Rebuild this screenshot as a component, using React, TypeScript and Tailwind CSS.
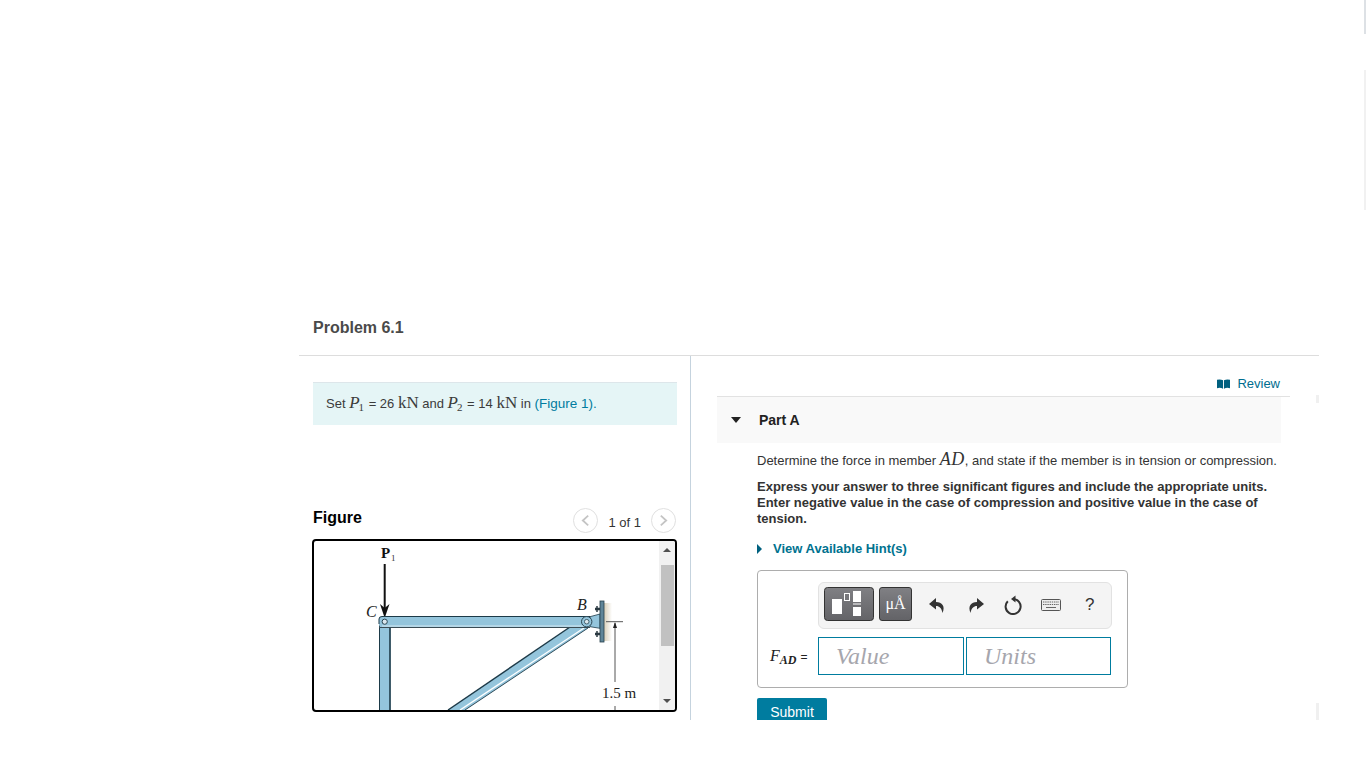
const serif = "font-['Liberation_Serif',serif]";

function Diagram() {
  return (
    <svg viewBox="0 0 345 169" className="block h-[169px] w-[345px]">
      <defs>
        <linearGradient id="wallShadow" x1="0" y1="0" x2="1" y2="0">
          <stop offset="0" stopColor="#d8cfb8" />
          <stop offset="1" stopColor="#ffffff" />
        </linearGradient>
      </defs>
      <text x="67" y="17" fontFamily="Liberation Serif" fontWeight="700" fontSize="15" fill="#111">P</text>
      <text x="77" y="20" fontFamily="Liberation Serif" fontSize="9" fill="#333">1</text>
      <path d="M70.7 23V68" stroke="#111" strokeWidth="2" />
      <path d="M66 63L70.7 77L75.5 63L70.7 67Z" fill="#111" />
      <text x="52" y="76" fontFamily="Liberation Serif" fontStyle="italic" fontSize="16" fill="#222">C</text>
      <text x="263" y="69" fontFamily="Liberation Serif" fontStyle="italic" fontSize="16" fill="#222">B</text>

      {/* vertical member */}
      <path d="M65 82H76.5V169H65Z" fill="#94c5dc" />
      <path d="M65.5 82V169" stroke="#1d3a48" strokeWidth="1" />
      <path d="M76 86V169" stroke="#1d3a48" strokeWidth="1.6" />

      {/* diagonal member */}
      <path d="M134 169L256 86L274 87L151 169Z" fill="#94c5dc" />
      <path d="M134 169L256 86" stroke="#1d3a48" strokeWidth="1.4" />
      <path d="M146 169L270 87" stroke="#ffffff" strokeWidth="1.4" />
      <path d="M151 169L274 87" stroke="#1d3a48" strokeWidth="0.9" />

      {/* top member */}
      <path d="M65 78Q65 75.5 68 75.5H276V86.5H68Q65 86 65 83Z" fill="#94c5dc" />
      <path d="M65 83V78Q65 75.5 68 75.5H276" fill="none" stroke="#1d3a48" strokeWidth="1" />
      <path d="M68 85H276" stroke="#d6e9f2" strokeWidth="1" />
      <path d="M65 86.5H276" stroke="#3a4c55" strokeWidth="1" />

      {/* support */}
      <rect x="290" y="62" width="8" height="38" fill="url(#wallShadow)" />
      <path d="M276 75.7L286 73V87.3L276 85.7Z" fill="#94c5dc" stroke="#1d3a48" strokeWidth="0.8" />
      <rect x="286" y="60" width="4" height="41" fill="#5f8598" stroke="#26404c" strokeWidth="0.8" />
      <path d="M281 68H286M281 93H286" stroke="#2b3a42" strokeWidth="2.4" />
      <path d="M283 65V71M283 90V96" stroke="#2b3a42" strokeWidth="1.5" />
      <circle cx="272.7" cy="80.7" r="5.2" fill="#94c5dc" stroke="#2b4653" />
      <circle cx="272.7" cy="80.7" r="2.3" fill="#dce8ee" stroke="#2b4653" strokeWidth="0.8" />
      <circle cx="70.7" cy="80.7" r="2.6" fill="#dce8ee" stroke="#2b4653" />

      {/* dimension */}
      <path d="M292 80.7H309" stroke="#555" />
      <path d="M301 82V141M301 165V169" stroke="#555" />
      <path d="M299 87L301 81L303 87Z" fill="#222" />
      <text x="288" y="157" fontFamily="Liberation Serif" fontSize="15" fill="#222">1.5 m</text>
    </svg>
  );
}

function FigureBox() {
  return (
    <div className="-ml-[1px] flex h-[173px] w-[365px] overflow-hidden rounded-[4px] border-2 border-black">
      <div className="min-w-0 flex-1 overflow-hidden">
        <Diagram />
      </div>
      <div className="flex w-[16px] shrink-0 flex-col items-center bg-[#f1f1f1]">
        <div className="mt-[7px] h-0 w-0 border-x-[4px] border-b-[4px] border-x-transparent border-b-[#505050]" />
        <div className="mt-[13px] h-[81px] w-[13px] bg-[#c1c1c1]" />
        <div className="mt-auto mb-[7px] h-0 w-0 border-x-[4px] border-t-[4px] border-x-transparent border-t-[#505050]" />
      </div>
    </div>
  );
}

function PagerButton({ dir }: { dir: "left" | "right" }) {
  return (
    <div className="flex h-[25px] w-[25px] items-center justify-center rounded-full border border-[#e0e0e0] bg-white">
      <svg viewBox="0 0 10 14" className="h-[13px] w-[9px]" fill="none" stroke="#c4c4c4" strokeWidth="2">
        <path d={dir === "left" ? "M8 1.5L2 7L8 12.5" : "M2 1.5L8 7L2 12.5"} />
      </svg>
    </div>
  );
}

function MathVar({ base, sub }: { base: string; sub: string }) {
  return (
    <span className={`${serif} text-[17px] italic`}>
      {base}
      <sub className="ml-[-1px] pr-[1px] text-[11px] not-italic">{sub}</sub>
    </span>
  );
}

function Kn() {
  return <span className={`${serif} text-[17px]`}>kN</span>;
}

function LeftPane() {
  return (
    <div className="w-[392px] shrink-0 border-r border-[#c5d3de] pl-[14px]">
      <div className="mt-[26px] flex h-[43px] w-[364px] items-center border-t border-[#dde6ea] bg-[#e5f5f6] pb-[2px] pl-[13px] text-[13px] text-[#3b3b3b]">
        <span>
          Set <MathVar base="P" sub="1" /> = 26 <Kn /> and <MathVar base="P" sub="2" /> = 14 <Kn /> in{" "}
          <span className="text-[13.5px] text-[#007c9f]">(Figure 1).</span>
        </span>
      </div>
      <div className="mt-[79px] flex h-[35px] w-[364px] items-start justify-between">
        <span className="mt-[2px] text-[16px] font-bold text-black">Figure</span>
        <div className="mt-[4px] mr-[1px] flex items-center gap-[10px] text-[13px] text-[#333]">
          <PagerButton dir="left" />
          <span className="pt-[4px]">1 of 1</span>
          <PagerButton dir="right" />
        </div>
      </div>
      <FigureBox />
    </div>
  );
}

function TemplateIcon() {
  return (
    <svg viewBox="0 0 50 34" className="mb-[2px] h-[34px] w-[50px]">
      <defs>
        <linearGradient id="tool" x1="0" y1="0" x2="0" y2="1">
          <stop offset="0" stopColor="#808084" />
          <stop offset="1" stopColor="#636367" />
        </linearGradient>
      </defs>
      <rect x="0.5" y="0.5" width="49" height="33" rx="3" fill="url(#tool)" stroke="#333" />
      <rect x="8" y="12" width="10" height="15" fill="#fff" />
      <rect x="20.5" y="6.5" width="5" height="7" fill="none" stroke="#fff" />
      <rect x="29" y="4" width="8" height="11" fill="#fff" />
      <rect x="29" y="16.5" width="8" height="1" fill="#fff" />
      <rect x="29" y="20" width="8" height="9" fill="#fff" />
    </svg>
  );
}

function AnswerBox() {
  return (
    <div className="mt-[11px] h-[118px] w-[371px] rounded-[4px] border border-[#adadad] bg-white">
      <div className="mt-[11px] ml-[60px] flex h-[47px] w-[294px] items-center rounded-[6px] border border-[#e2e2e2] bg-[#f4f4f4] pl-[5px] text-[#333]">
        <TemplateIcon />
        <div className={`${serif} mb-[2px] ml-[5px] flex h-[34px] w-[33px] items-center justify-center rounded-[3px] border border-[#333] bg-gradient-to-b from-[#808084] to-[#636367] text-[16px] text-white`}>
          μÅ
        </div>
        <svg viewBox="0 0 18 18" className="ml-[16px] h-[18px] w-[18px]" fill="#333">
          <path d="M8 2L1 8L8 13.5V10C11.5 10 13.5 12 14.5 17C17.5 10 14 6 8 6Z" />
        </svg>
        <svg viewBox="0 0 18 18" className="ml-[21px] h-[18px] w-[18px]" fill="#333">
          <path d="M10 2L17 8L10 13.5V10C6.5 10 4.5 12 3.5 17C0.5 10 4 6 10 6Z" />
        </svg>
        <svg viewBox="0 0 18 20" className="ml-[19px] h-[20px] w-[18px]" fill="none" stroke="#333" strokeWidth="2">
          <path d="M9 4A7.5 7.5 0 1 1 3.8 6.2" />
          <path d="M7 4L11.5 0.5V7.5Z" fill="#333" stroke="none" />
        </svg>
        <svg viewBox="0 0 20 12" className="ml-[19px] h-[12px] w-[20px]">
          <rect x="0.5" y="0.5" width="19" height="11" rx="1" fill="#eee" stroke="#555" />
          <path d="M2 3H18M2 5.5H18" stroke="#666" strokeDasharray="1.4 0.8" />
          <path d="M5 8.5H15" stroke="#666" />
        </svg>
        <span className="ml-[24px] text-[17px]">?</span>
      </div>
      <div className="mt-[8px] ml-[12px] flex items-center">
        <span className={`${serif} w-[48px] text-[16px] text-[#222] italic`}>
          F<sub className="text-[12px] font-bold">AD</sub>
          <span className="ml-[4px] font-['Liberation_Sans',sans-serif] text-[12px] not-italic">=</span>
        </span>
        <div className={`${serif} flex h-[38px] w-[146px] items-center border border-[#007c9f] pl-[17px] text-[24px] text-[#a6a6ad] italic`}>
          Value
        </div>
        <div className={`${serif} ml-[2px] flex h-[38px] w-[145px] items-center border border-[#007c9f] pl-[17px] text-[24px] text-[#a6a6ad] italic`}>
          Units
        </div>
      </div>
    </div>
  );
}

function RightPane() {
  return (
    <div className="min-w-0 flex-1 pl-[26px]">
      <div className="mr-[29px] flex h-[41px] items-center justify-end border-b border-[#e2e2e2] pt-[15px] pr-[10px] text-[13px] text-[#006d8f]">
        <svg viewBox="0 0 14 10" className="mr-[7px] h-[10px] w-[13px]" fill="#00607f">
          <path d="M0 0.5Q3.5 -0.5 6.5 1V10Q3.5 8.5 0 9.5ZM7.5 1Q10.5 -0.5 14 0.5V9.5Q10.5 8.5 7.5 10Z" />
        </svg>
        Review
      </div>
      <div className="mr-[38px] flex h-[46px] items-center bg-[#f9f9f9] pl-[14px]">
        <div className="h-0 w-0 border-x-[5.5px] border-t-[6px] border-x-transparent border-t-[#222]" />
        <span className="ml-[18px] text-[14px] leading-[20px] font-bold text-[#222]">Part A</span>
      </div>
      <div className="pl-[40px] text-[#333]">
        <p className="mt-[7px] text-[13px] leading-[18px] whitespace-nowrap">
          Determine the force in member <span className={`${serif} text-[18px] leading-[18px] tracking-[0.5px] italic`}>AD</span>, and state if the member is in tension or compression.
        </p>
        <p className="mt-[9px] w-[520px] text-[13px] leading-[16px] font-bold">
          Express your answer to three significant figures and include the appropriate units. Enter negative value in the case of compression and positive value in the case of tension.
        </p>
        <div className="mt-[12px] flex items-center text-[13px] font-bold text-[#00728f]">
          <div className="h-0 w-0 border-y-[5px] border-l-[5px] border-y-transparent border-l-[#00607f]" />
          <span className="ml-[11px]">View Available Hint(s)</span>
        </div>
        <AnswerBox />
        <div className="mt-[10px] h-[22px] w-[70px] overflow-hidden rounded-t-[2px] bg-[#007c9f] pt-[6px] text-center text-[14px] leading-[16px] text-white">
          Submit
        </div>
      </div>
    </div>
  );
}

export default function App() {
  return (
    <div className="relative h-[768px] w-[1366px] overflow-hidden bg-white font-['Liberation_Sans',sans-serif]">
      <div className="absolute top-0 right-0 h-[34px] w-[2px] bg-[#dde1e5]" />
      <div className="absolute top-[70px] right-0 h-[140px] w-[2px] bg-[#f1f1f1]" />
      <div className="absolute top-[395px] left-[1316px] h-[8px] w-[3px] bg-[#f0f0f0]" />
      <div className="absolute top-[703px] left-[1316px] h-[17px] w-[3px] bg-[#f0f0f0]" />
      <div className="pt-[316px] pl-[299px]">
        <div className="w-[1020px]">
          <div className="h-[40px] border-b border-[#dddddd] pl-[14px] text-[16px] font-bold text-[#4a4a4a]">
            Problem 6.1
          </div>
          <div className="flex h-[364px] overflow-hidden">
            <LeftPane />
            <RightPane />
          </div>
        </div>
      </div>
    </div>
  );
}
